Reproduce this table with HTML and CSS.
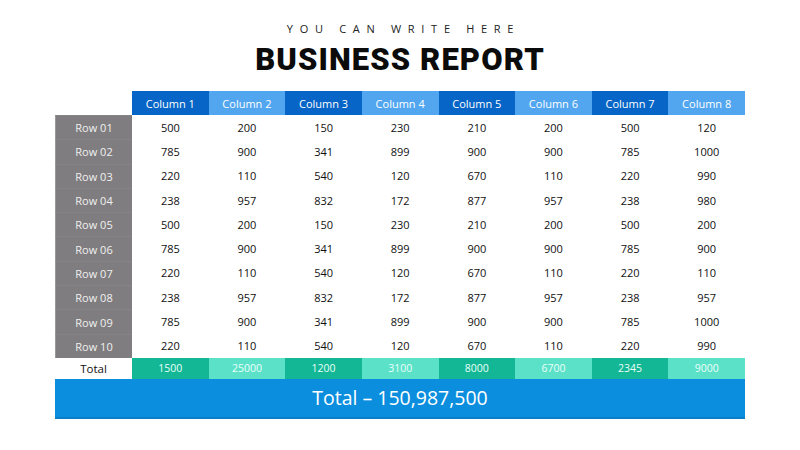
FILE: index.html
```html
<!DOCTYPE html>
<html>
<head>
<meta charset="utf-8">
<link rel="stylesheet" href="styles.css">
</head>
<body>
<div class="page">
  <div class="eyebrow">YOU CAN WRITE HERE</div>
  <h1 class="title">BUSINESS REPORT</h1>
  <div class="table">
    <div class="row head">
      <div class="corner"></div>
      <div class="hc dark">Column 1</div>
      <div class="hc light">Column 2</div>
      <div class="hc dark">Column 3</div>
      <div class="hc light">Column 4</div>
      <div class="hc dark">Column 5</div>
      <div class="hc light">Column 6</div>
      <div class="hc dark">Column 7</div>
      <div class="hc light">Column 8</div>
    </div>
    <div class="row"><div class="lab">Row 01</div><div>500</div><div>200</div><div>150</div><div>230</div><div>210</div><div>200</div><div>500</div><div>120</div></div>
    <div class="row"><div class="lab">Row 02</div><div>785</div><div>900</div><div>341</div><div>899</div><div>900</div><div>900</div><div>785</div><div>1000</div></div>
    <div class="row"><div class="lab">Row 03</div><div>220</div><div>110</div><div>540</div><div>120</div><div>670</div><div>110</div><div>220</div><div>990</div></div>
    <div class="row"><div class="lab">Row 04</div><div>238</div><div>957</div><div>832</div><div>172</div><div>877</div><div>957</div><div>238</div><div>980</div></div>
    <div class="row"><div class="lab">Row 05</div><div>500</div><div>200</div><div>150</div><div>230</div><div>210</div><div>200</div><div>500</div><div>200</div></div>
    <div class="row"><div class="lab">Row 06</div><div>785</div><div>900</div><div>341</div><div>899</div><div>900</div><div>900</div><div>785</div><div>900</div></div>
    <div class="row"><div class="lab">Row 07</div><div>220</div><div>110</div><div>540</div><div>120</div><div>670</div><div>110</div><div>220</div><div>110</div></div>
    <div class="row"><div class="lab">Row 08</div><div>238</div><div>957</div><div>832</div><div>172</div><div>877</div><div>957</div><div>238</div><div>957</div></div>
    <div class="row"><div class="lab">Row 09</div><div>785</div><div>900</div><div>341</div><div>899</div><div>900</div><div>900</div><div>785</div><div>1000</div></div>
    <div class="row"><div class="lab">Row 10</div><div>220</div><div>110</div><div>540</div><div>120</div><div>670</div><div>110</div><div>220</div><div>990</div></div>
    <div class="row total">
      <div class="tlab">Total</div>
      <div class="tc tdark">1500</div>
      <div class="tc tlight">25000</div>
      <div class="tc tdark">1200</div>
      <div class="tc tlight">3100</div>
      <div class="tc tdark">8000</div>
      <div class="tc tlight">6700</div>
      <div class="tc tdark">2345</div>
      <div class="tc tlight">9000</div>
    </div>
    <div class="grand">Total – 150,987,500</div>
  </div>
</div>
</body>
</html>
```

FILE: styles.css
```css
* { box-sizing: border-box; }
html, body { margin: 0; padding: 0; background: #ffffff; }
body { width: 800px; height: 450px; overflow: hidden; font-family: "Open Sans", "Noto Sans", sans-serif; }
.page { padding-top: 22px; display: flex; flex-direction: column; align-items: center; }
.eyebrow {
  font-family: "Open Sans", sans-serif;
  font-size: 11px;
  letter-spacing: 6.7px;
  line-height: 14px;
  color: #222;
  margin-left: 7px;
}
.title {
  margin: 4px 0 0 0;
  font-family: Roboto, "Liberation Sans", sans-serif;
  font-weight: 900;
  font-size: 31px;
  line-height: 40px;
  color: #0b0b0b;
  letter-spacing: 1.1px;
}
.table { margin-top: 11px; width: 690px; display: flex; flex-direction: column; }
.row {
  display: grid;
  grid-template-columns: 77px repeat(8, 1fr);
  height: 24.3px;
  font-size: 11px;
  color: #111;
}
.row > div { display: flex; align-items: center; justify-content: center; }
.row.head { height: 24px; }
.hc { color: #ffffff; }
.dark { background: #0665c6; }
.light { background: #52a6ef; }
.lab {
  background: #7f7d7f;
  color: #f0f0f0;
  border-top: 1px solid #858385;
  border-left: 1px solid #9a989a;
}
.row.total { height: 21px; }
.tlab { background: #fff; color: #111; font-size: 11.5px; }
.tc { color: #eafff8; font-size: 10.5px; }
.tdark { background: #13b795; }
.tlight { background: #5ce1c9; }
.grand {
  height: 40px;
  background: #0b8ede;
  border-bottom: 2px solid #0a7fc8;
  color: #ffffff;
  font-size: 19.5px;
  display: flex;
  align-items: center;
  justify-content: center;
}
```
